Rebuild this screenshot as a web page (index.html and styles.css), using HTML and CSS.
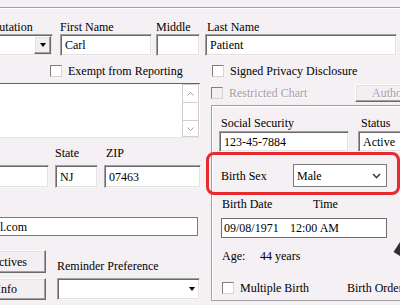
FILE: index.html
```html
<!DOCTYPE html>
<html>
<head>
<meta charset="utf-8">
<link rel="stylesheet" href="styles.css">
</head>
<body>
<div class="screen">
  <div class="rule"></div>

  <div class="name-row">
    <div class="fld f-sal">
      <div class="lbl">Salutation</div>
      <div class="sunk combo"><span class="dd"><i class="tri"></i></span></div>
    </div>
    <div class="fld f-first">
      <div class="lbl">First Name</div>
      <div class="sunk">Carl</div>
    </div>
    <div class="fld f-mid">
      <div class="lbl">Middle</div>
      <div class="sunk"></div>
    </div>
    <div class="fld f-last">
      <div class="lbl">Last Name</div>
      <div class="sunk">Patient</div>
    </div>
  </div>

  <div class="body-grid">
    <div class="col-left">
      <div class="chk exempt"><span class="box"></span><span>Exempt from Reporting</span></div>

      <div class="memo">
        <div class="memo-text"></div>
        <div class="sb">
          <div class="sb-btn up"><svg width="7" height="4" viewBox="0 0 7 4"><polyline points="0.5,3.5 3.5,0.5 6.5,3.5" fill="none" stroke="#9a9a9a" stroke-width="1"/></svg></div>
          <div class="sb-track"></div>
          <div class="sb-btn down"><svg width="7" height="4" viewBox="0 0 7 4"><polyline points="0.5,0.5 3.5,3.5 6.5,0.5" fill="none" stroke="#9a9a9a" stroke-width="1"/></svg></div>
        </div>
      </div>

      <div class="addr">
        <div class="fld f-city">
          <div class="lbl"></div>
          <div class="sunk"></div>
        </div>
        <div class="fld f-state">
          <div class="lbl">State</div>
          <div class="sunk">NJ</div>
        </div>
        <div class="fld f-zip">
          <div class="lbl">ZIP</div>
          <div class="sunk">07463</div>
        </div>
      </div>

      <div class="email">l.com</div>

      <div class="bottom">
        <div class="btns">
          <div class="btn b1">Directives</div>
          <div class="btn b2">Info</div>
        </div>
        <div class="rem">
          <div class="lbl">Reminder Preference</div>
          <div class="sunk rem-sel"><i class="tri"></i></div>
        </div>
      </div>
    </div>

    <div class="col-right">
      <div class="chk signed"><span class="box"></span><span>Signed Privacy Disclosure</span></div>

      <div class="restr">
        <div class="chk disabled"><span class="box"></span><span>Restricted Chart</span></div>
        <div class="btn autho">Authorization</div>
      </div>

      <div class="group">
        <div class="g-row1">
          <div class="fld f-ss">
            <div class="lbl">Social Security</div>
            <div class="sunk">123-45-7884</div>
          </div>
          <div class="fld f-status">
            <div class="lbl">Status</div>
            <div class="sunk">Active</div>
          </div>
        </div>

        <div class="sex-row">
          <div class="sex-lbl">Birth Sex</div>
          <div class="sel">
            <span>Male</span>
            <svg width="9" height="6" viewBox="0 0 9 6"><polyline points="1,1 4.5,4.5 8,1" fill="none" stroke="#444" stroke-width="1.6"/></svg>
          </div>
        </div>

        <div class="bd-labels">
          <div class="bd-l1">Birth Date</div>
          <div>Time</div>
        </div>
        <div class="bd-input">
          <span class="bd-date">09/08/1971</span>
          <span>12:00 AM</span>
        </div>

        <div class="age">
          <span class="age-l">Age:</span>
          <span>44 years</span>
        </div>

        <div class="mb-row">
          <div class="chk mb"><span class="box"></span><span>Multiple Birth</span></div>
          <div class="bo">Birth Order</div>
        </div>
      </div>
    </div>
  </div>

  <div class="highlight"></div>
  <svg class="cursor" width="8" height="18" viewBox="0 0 8 18"><polygon points="1.5,12 8,2 8,16" fill="#2e3133"/></svg>
</div>
</body>
</html>
```

FILE: styles.css
```css
* { box-sizing: border-box; }
html, body { margin: 0; padding: 0; background: #f4f0f4; }

.screen {
  position: relative;
  width: 400px;
  height: 305px;
  overflow: hidden;
  background: #f4f0f4;
  font-family: "Liberation Serif", "Times New Roman", serif;
  font-size: 12px;
  line-height: 14px;
  color: #000;
}

.rule {
  margin-top: 7px;
  height: 2px;
  border-top: 1px solid #a0a0a0;
  border-bottom: 1px solid #ffffff;
}

.fld { display: flex; flex-direction: column; flex: none; }
.lbl { height: 14px; white-space: nowrap; }

.sunk {
  background: #fff;
  border: 1px solid;
  border-color: #a0a0a0 #f6f6f6 #f6f6f6 #a0a0a0;
  box-shadow: inset 1px 1px 0 #6b6b6b, inset -1px -1px 0 #e3e3e3;
  display: flex;
  align-items: center;
  padding-left: 4px;
  white-space: nowrap;
  overflow: hidden;
}

/* name row */
.name-row { display: flex; margin-top: 11px; }
.name-row .sunk { height: 22px; }
.f-sal { margin-left: -40px; width: 93px; }
.f-sal .lbl { padding-left: 24px; }
.f-first { margin-left: 7px; width: 92px; }
.f-mid { margin-left: 4px; width: 44px; }
.f-last { margin-left: 5px; width: 192px; }
.f-last .lbl { padding-left: 2px; }

.combo { justify-content: flex-end; padding: 1px 1px 1px 0; }
.dd {
  width: 17px;
  height: 100%;
  background: #f0f0f0;
  border: 1px solid;
  border-color: #ffffff #696969 #696969 #ffffff;
  box-shadow: inset -1px -1px 0 #a0a0a0, inset 1px 1px 0 #e3e3e3;
  display: flex;
  align-items: center;
  justify-content: center;
}
.tri {
  display: block;
  width: 0;
  height: 0;
  border-left: 3.5px solid transparent;
  border-right: 3.5px solid transparent;
  border-top: 4px solid #000;
}

/* main grid */
.body-grid {
  display: grid;
  grid-template-columns: 205px 195px;
  margin-top: 7px;
}

.chk { display: flex; align-items: center; height: 15px; white-space: nowrap; }
.box {
  flex: none;
  width: 12px;
  height: 12px;
  margin-right: 6px;
  background: #fff;
  border: 1px solid;
  border-color: #7f7f7f #d4d4d4 #d4d4d4 #7f7f7f;
}
.chk.disabled { color: #a3a0a3; text-shadow: 1px 1px 0 #fff; }
.chk.disabled .box { background: #f0f0f0; }

/* left column */
.exempt { margin-left: 50px; }

.memo {
  margin-top: 5px;
  width: 200px;
  height: 55px;
  display: flex;
  background: #fff;
  border-top: 1px solid #646464;
  border-bottom: 1px solid #e6e6e6;
}
.memo-text { flex: 1; }
.sb { width: 17px; display: flex; flex-direction: column; margin-right: 1px; }
.sb-btn {
  border: 1px solid #cfcfcf;
  display: flex;
  align-items: center;
  justify-content: center;
}
.sb-btn.up { height: 19px; }
.sb-btn.down { height: 17px; }
.sb-btn svg { display: block; }
.sb-track { flex: 1; border-left: 1px solid #cfcfcf; border-right: 1px solid #cfcfcf; }

.addr { display: flex; margin-top: 8px; }
.addr .sunk { height: 23px; margin-top: 5px; }
.f-city { margin-left: -60px; width: 109px; }
.f-state { margin-left: 6px; width: 43px; }
.f-zip { margin-left: 6px; width: 97px; }
.f-zip .lbl { padding-left: 2px; }

.email {
  margin-top: 29px;
  margin-left: -5px;
  width: 203px;
  height: 19px;
  border: 1px solid #7a7a7a;
  background: #fff;
  padding-left: 4px;
  display: flex;
  align-items: center;
  white-space: nowrap;
}

.bottom { display: flex; margin-top: 14px; }
.btns { display: flex; flex-direction: column; gap: 5px; margin-left: -40px; width: 86px; flex: none; }
.btn {
  background: #f2eef2;
  border: 1px solid;
  border-color: #ffffff #696969 #696969 #ffffff;
  box-shadow: inset -1px -1px 0 #a0a0a0, inset 1px 1px 0 #e3e3e3;
  display: flex;
  align-items: center;
  justify-content: flex-end;
  white-space: nowrap;
  overflow: hidden;
}
.b1 { height: 23px; padding-right: 18px; }
.b2 { height: 22px; padding-right: 28px; }

.rem { margin-left: 11px; width: 143px; display: flex; flex-direction: column; }
.rem .lbl { margin-top: 9px; }
.rem-sel { margin-top: 5px; height: 22px; justify-content: flex-end; padding-right: 4px; }

/* right column */
.signed { margin-left: 7px; }

.restr { display: flex; align-items: center; height: 18px; margin-top: 6px; }
.restr .chk { margin-left: 6px; }
.autho {
  margin-left: auto;
  margin-right: -2px;
  width: 47px;
  height: 18px;
  justify-content: flex-start;
  padding-left: 16px;
  color: #a3a0a3;
  text-shadow: 1px 1px 0 #fff;
}

.group {
  margin-top: 3px;
  margin-left: 6px;
  margin-right: -10px;
  height: 196px;
  border: 1px solid #a0a0a0;
  box-shadow: inset 1px 1px 0 #fff;
}

.g-row1 { display: flex; margin-top: 10px; }
.g-row1 .sunk { margin-top: 1px; height: 21px; }
.f-ss { margin-left: 7px; width: 130px; }
.f-ss .lbl { padding-left: 2px; }
.f-status { margin-left: 9px; width: 70px; }
.f-status .lbl { padding-left: 3px; }

.sex-row { display: flex; align-items: center; height: 23px; margin-top: 12px; }
.sex-lbl { margin-left: 9px; width: 72px; }
.sel {
  width: 94px;
  height: 23px;
  border: 1px solid #7a7a7a;
  background: #fff;
  padding: 0 5px 0 3px;
  display: flex;
  align-items: center;
  justify-content: space-between;
}
.sel svg { display: block; }

.bd-labels { display: flex; margin-top: 10px; }
.bd-l1 { margin-left: 10px; width: 91px; }
.bd-input {
  margin-top: 7px;
  margin-left: 9px;
  width: 166px;
  height: 20px;
  border: 1px solid #6d6d6d;
  background: #fff;
  display: flex;
  align-items: center;
  padding-left: 2px;
  white-space: nowrap;
}
.bd-date { width: 66px; }

.age { display: flex; margin-top: 11px; margin-left: 10px; }
.age-l { width: 38px; }

.mb-row { display: flex; align-items: center; height: 15px; margin-top: 17px; margin-left: 10px; }
.mb { width: 125px; }
.bo { white-space: nowrap; }

/* overlays */
.highlight {
  position: absolute;
  left: 206px;
  top: 152px;
  width: 194px;
  height: 43px;
  border: 3px solid #e62a2d;
  border-radius: 8px;
}
.cursor { position: absolute; left: 392px; top: 240px; }
```
